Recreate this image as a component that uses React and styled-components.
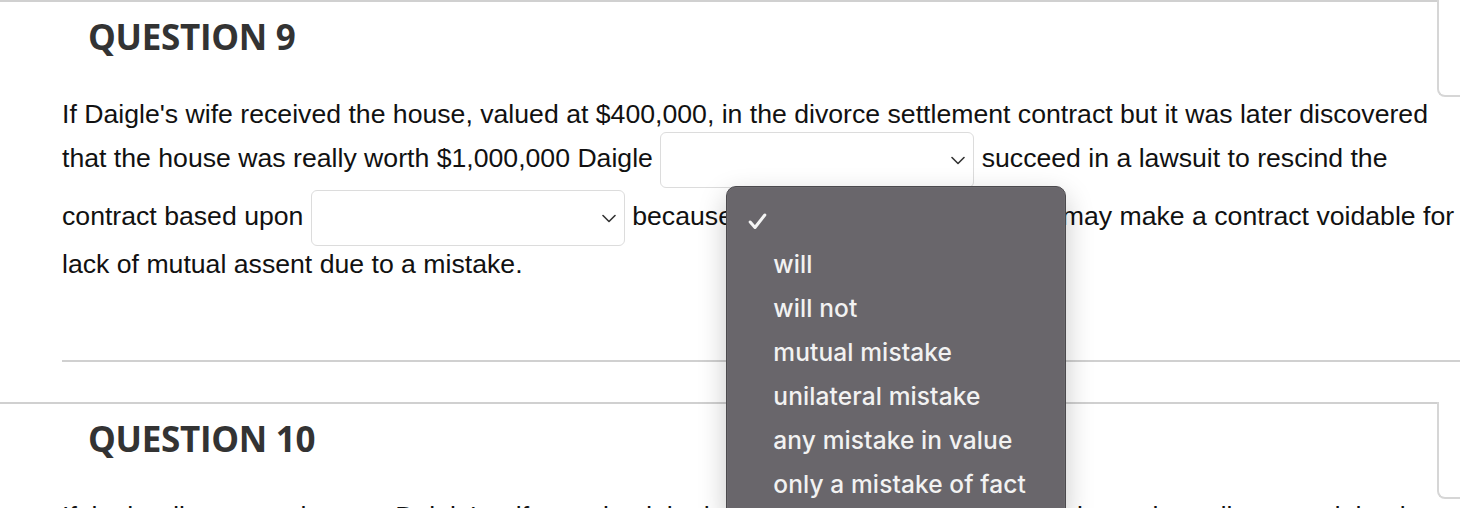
import React from 'react';
import styled, { createGlobalStyle } from 'styled-components';

const GlobalStyle = createGlobalStyle`
  html, body {
    margin: 0;
    padding: 0;
    background: #fff;
    overflow: hidden;
  }
  body {
    font-family: "Liberation Sans", Arial, Helvetica, sans-serif;
  }
`;

const Page = styled.div`
  width: 1460px;
  height: 508px;
  overflow: hidden;
`;

const Section = styled.section`
  display: flex;
  flex-direction: column;
`;

const Header = styled.div`
  display: flex;
  align-items: stretch;
  height: 97px;
`;

const Title = styled.h2`
  flex: 1;
  margin: 0;
  padding: 17px 0 0 88px;
  border-top: 2px solid #d0d0d0;
  font-family: "Open Sans", sans-serif;
  font-weight: 700;
  font-size: 35px;
  line-height: 35px;
  letter-spacing: -0.3px;
  color: #333;
`;

const PointsCard = styled.div`
  width: 23px;
  box-sizing: border-box;
  border-left: 2px solid #d6d6d6;
  border-bottom: 2px solid #d6d6d6;
  border-bottom-left-radius: 8px;
`;

const Question = styled.p`
  margin: 0;
  padding: 0 0 0 62px;
  font-size: 26.65px;
  line-height: 34px;
  color: #111;
`;

const SelectBox = styled.span`
  position: relative;
  display: inline-flex;
  align-items: center;
  justify-content: flex-end;
  box-sizing: border-box;
  width: 314px;
  height: 56px;
  margin: 1px 0;
  padding-right: 8px;
  vertical-align: middle;
  border: 1px solid #dcdcdc;
  border-radius: 6px;
  background: #fff;
`;

const Chevron = () => (
  <svg width="14" height="9" viewBox="0 0 14 9" fill="none">
    <path d="M1 1.5 L7 7.5 L13 1.5" stroke="#333" strokeWidth="1.6" strokeLinecap="round" strokeLinejoin="round" />
  </svg>
);

const Menu = styled.ul`
  position: absolute;
  left: -15px;
  top: -5px;
  z-index: 5;
  width: 340px;
  margin: 0;
  padding: 11px 0;
  box-sizing: border-box;
  list-style: none;
  background: #69666b;
  border: 1px solid #4b494d;
  border-radius: 10px;
  box-shadow: 0 10px 28px rgba(0, 0, 0, 0.22), 0 0 0 0.5px rgba(255, 255, 255, 0.08) inset;
`;

const MenuItem = styled.li`
  position: relative;
  height: 44px;
  display: flex;
  align-items: center;
  padding-left: 46px;
  font-family: Inter, "Noto Sans", sans-serif;
  font-size: 24.5px;
  font-weight: 500;
  letter-spacing: 0.1px;
  color: #f2f2f2;
  white-space: nowrap;
`;

const Check = styled.svg`
  position: absolute;
  left: 21px;
  top: 15px;
`;

const Rule = styled.hr`
  margin: 79px 0 40px 62px;
  border: 0;
  border-top: 2px solid #d0d0d0;
  height: 0;
`;

const options = ['', 'will', 'will not', 'mutual mistake', 'unilateral mistake', 'any mistake in value', 'only a mistake of fact'];

const Select = ({ open }) => (
  <SelectBox>
    <Chevron />
    {open && (
      <Menu>
        {options.map((o, i) => (
          <MenuItem key={i}>
            {i === 0 && (
              <Check width="19" height="17" viewBox="0 0 19 17" fill="none">
                <path d="M2.2 9 L7 14.5 L16.8 2" stroke="#f4f4f4" strokeWidth="3" strokeLinecap="round" strokeLinejoin="round" />
              </Check>
            )}
            {o}
          </MenuItem>
        ))}
      </Menu>
    )}
  </SelectBox>
);

export default function App() {
  return (
    <Page>
      <GlobalStyle />
      <Section>
        <Header>
          <Title>QUESTION 9</Title>
          <PointsCard />
        </Header>
        <Question>
          If Daigle's wife received the house, valued at $400,000, in the divorce settlement contract but it was later discovered
          that the house was really worth $1,000,000 Daigle <Select /> succeed in a lawsuit to rescind the contract based
          upon <Select /> because <Select open /> may make a contract voidable for lack of mutual assent due to a mistake.
        </Question>
        <Rule />
      </Section>
      <Section>
        <Header>
          <Title>QUESTION 10</Title>
          <PointsCard />
        </Header>
        <Question>
          If, in the divorce settlement, Daigle's wife received the house, valued at $400,000, but it was later discovered that it was
          really worth $1,000,000, Daigle could rescind the contract.
        </Question>
      </Section>
    </Page>
  );
}
